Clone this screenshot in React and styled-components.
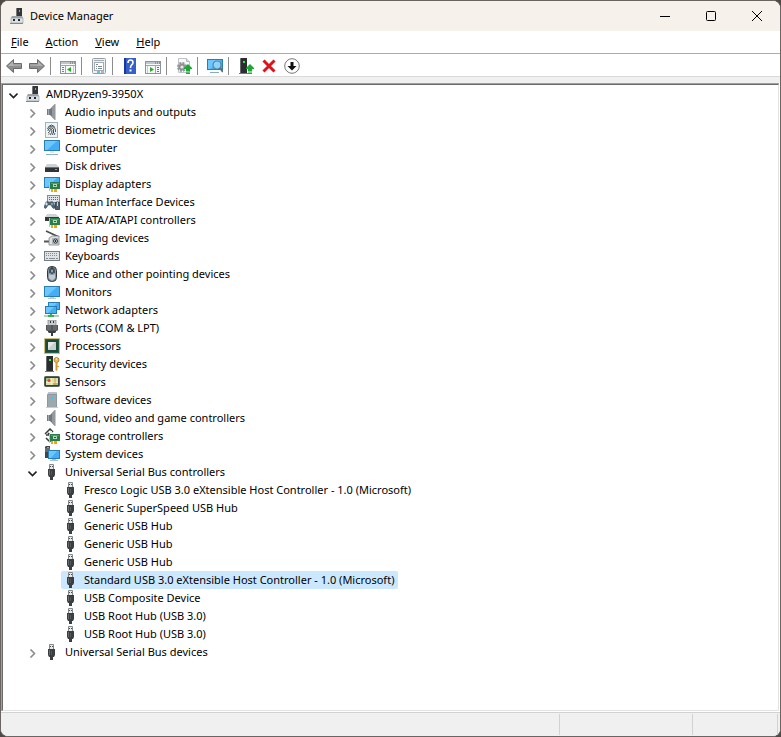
import React, { useState } from "react";
import styled, { createGlobalStyle } from "styled-components";

const GlobalStyle = createGlobalStyle`
    * {
        box-sizing: border-box;
    }
    body {
        margin: 0;
        background: #504a46;
        color: #000;
        font-family: "Noto Sans", "Open Sans", sans-serif;
        font-size: 11px;
        line-height: 16px;
    }
    button {
        padding: 0;
        border: 0;
        background: none;
        color: inherit;
        font: inherit;
    }
`

const Window = styled.div`
    height: 100vh;
    display: flex;
    flex-direction: column;
    overflow: hidden;
    border: 1px solid #6b6562;
    border-radius: 8px;
    background: #fff;
`

const TitleBar = styled.header`
    height: 30px;
    flex: none;
    display: flex;
    align-items: center;
    padding-left: 8px;
    background: #f6f1eb;
`

const Title = styled.h1`
    flex: 1;
    margin: 0 0 0 5px;
    font-size: 11px;
    font-weight: 400;
`

const CaptionButton = styled.button`
    width: 46px;
    height: 30px;
    display: flex;
    align-items: center;
    justify-content: center;

    &:hover {
        background: ${props => props.$danger ? "#e81123" : "#e8e3dd"};
    }
`

const MenuBar = styled.nav`
    height: 23px;
    flex: none;
    display: flex;
    padding-left: 2px;
    border-bottom: 1px solid #a9adb5;
`

const MenuButton = styled.button`
    padding: 0 9px 0 8px;

    &:hover {
        background: #e5f3ff;
    }
`

const Toolbar = styled.div`
    height: 23px;
    flex: none;
    display: flex;
    align-items: center;
    padding: 2px 0 0 1px;
    border-bottom: 1px solid #dadada;
`

const ToolButton = styled.button`
    width: 23px;
    height: 20px;
    display: flex;
    align-items: center;
    justify-content: center;

    &:hover {
        background: #e5f3ff;
    }
`

const Separator = styled.span`
    width: 1px;
    height: 18px;
    margin: 0 5px 0 2px;
    background: #8c8c8c;
`

const Frame = styled.main`
    flex: 1;
    min-height: 0;
    display: flex;
    margin-right: 1px;
    border-top: 1px solid #a0a0a0;
    border-left: 1px solid #a0a0a0;
`

const Panel = styled.div`
    flex: 1;
    overflow: auto;
    border: 1px solid;
    border-color: #696969 #e3e3e3 #e3e3e3 #696969;
`

const Gutter = styled.div`
    height: 6px;
    flex: none;
    background: #f0f0f0;
`

const Tree = styled.ul`
    margin: 0;
    padding: 0 0 0 ${props => props.$nested ? "19px" : "1px"};
    list-style: none;
`

const Row = styled.div`
    height: 18px;
    display: flex;
`

const Toggle = styled.button`
    width: 19px;
    height: 18px;
    display: flex;
    align-items: center;
    justify-content: center;
    padding-top: 3px;
`

const Label = styled.button`
    display: flex;
    align-items: center;
    gap: 5px;
    padding: 0 4px 0 2px;
    border-radius: 2px;
    background: ${props => props.$selected ? "#cce8ff" : "none"};
    white-space: nowrap;
`

const StatusBar = styled.footer`
    height: 24px;
    flex: none;
    display: grid;
    grid-template-columns: 1fr 133px 85px;
    margin-top: 1px;
    padding: 1px 2px 1px 0;
    border-top: 1px solid #d2d2d2;
    background: #f0f0f0;
`

const StatusCell = styled.div`
    border-right: 1px solid #d2d2d2;
`

const svgProps = { width: 16, height: 16, viewBox: "0 0 16 16", "aria-hidden": true }

function Screen({ x = 0, y = 1, w = 16, h = 11 }) {
    return (
        <>
            <rect x={x + 0.5} y={y + 0.5} width={w - 1} height={h - 1} fill="#43aef5" stroke="#287eaf" />
            <path d={`M${x + 1} ${y + 1}h${w - 4}L${x + 3} ${y + h - 1}H${x + 1}z`} fill="#6cc6ff" />
        </>
    )
}

function Card() {
    return (
        <>
            <rect x="5" y="6" width="1" height="9" fill="#b9c4bd" />
            <path d="M6 6h10v7H6z" fill="#2a7d4b" />
            <path d="M7 7h8v1H7z" fill="#4f9f6d" />
            <rect x="9" y="8" width="4" height="3" fill="#a7dcb4" />
            <rect x="10" y="9" width="2" height="1" fill="#1c6038" />
            <path d="M7 13h2v3H7zM10 13h3v3h-3z" fill="#e9a713" />
        </>
    )
}

function GreenArrow() {
    return <path d="M12 6l4 4v1h-2v2h-4v-2H8v-1zM10 13.500h4v1h-4zM10 15h4v1h-4z" fill="#19a832" />
}

function Speaker() {
    return (
        <>
            <path d="M3 5h3v6H3z" fill="#747b80" />
            <path d="M4 5h1v6H4z" fill="#a3aaaf" />
            <path d="M6 5l5-5v16l-5-5z" fill="#71787d" />
            <path d="M8 3l3-3v16l-3-3z" fill="#939a9f" />
            <path d="M11 0h1v16h-1z" fill="#c6cbce" />
        </>
    )
}

function Tower() {
    return (
        <>
            <path d="M2 1l1-1h6v15H2z" fill="#2b2d2f" />
            <path d="M2 1l1-1v15H2z" fill="#666a6c" />
            <rect x="5" y="3" width="2" height="2" fill="#35e847" />
            <path d="M1 15h9v1H1z" fill="#777" />
        </>
    )
}

function Keys() {
    return (
        <>
            <rect x=".5" y="3.500" width="15" height="9" fill="#dfe3e6" stroke="#747d83" />
            <path d="M2 5.500h12M2 7.500h12" stroke="#858e94" strokeDasharray="1 1" />
            <path d="M2 10.500h2M5 10.500h6M12 10.500h2" stroke="#858e94" />
        </>
    )
}

function Console() {
    return (
        <>
            <rect x=".5" y="3.500" width="15" height="12" fill="#f7f8f9" stroke="#8a949b" />
            <path d="M1 4h14v2H1z" fill="#bfc7cd" />
            <path d="M10 5h1M12 5h1M14 5h1" stroke="#54616a" />
            <path d="M1 7.500h14" stroke="#9aa5ad" />
        </>
    )
}

const drawings = {
    root: (
        <>
            <path d="M7 1l1-1h5v9H7z" fill="#34373a" />
            <path d="M7 1l1-1v9H7z" fill="#777" />
            <rect x="10" y="2" width="1" height="2" fill="#35e847" />
            <path d="M3 8h10l1 2H2z" fill="#9ba3a8" />
            <path d="M2 10h12v5H2z" fill="#dce1e5" stroke="#929ca2" strokeWidth=".6" />
            <path d="M4 11h2v2H4zM9 11h2v2H9z" fill="#22272a" />
            <path d="M1 15h13v1H1z" fill="#7f8990" />
        </>
    ),
    speaker: <Speaker />,
    fingerprint: (
        <>
            <rect x="1.500" y=".5" width="12" height="15" fill="#edf4f6" stroke="#9eb3bb" />
            <g fill="none" stroke="#3b4348" strokeWidth=".9">
                <path d="M4.500 4.500q3-3 6 0M3.500 7q0-2.500 4-2.500t4 3.500v2M3.500 9q1-.5 1-2 3-2.500 5 0v4M4 11q2-1 2-3 1.500-1.500 2 0 0 3-2 5M8 13q1.500-2 1.500-4M4.500 12.500l1-1M10 13l1-2" />
            </g>
        </>
    ),
    computer: (
        <>
            <Screen y={0} h={11} />
            <path d="M6 11h4v2H6z" fill="#dbe7ed" />
            <path d="M2 14h12v1H2z" fill="#8db2c6" />
        </>
    ),
    disk: (
        <>
            <path d="M3 6h9l3 3H1z" fill="#cfd3d5" />
            <path d="M1 9h14v5H1z" fill="#303437" />
            <path d="M1 9h14v1H1z" fill="#6c7276" />
            <rect x="11" y="11" width="2" height="1" fill="#31db57" />
        </>
    ),
    display: <><Screen y={1} h={11} /><Card /></>,
    hid: (
        <>
            <rect x="3.500" y="1.500" width="12" height="7" fill="#e0e4e7" stroke="#858d93" />
            <path d="M5 3.500h10M5 5.500h10" stroke="#60686e" strokeDasharray="1 1" />
            <path d="M2 8q2-1 3 0h1q2-1 3 0l2 5q-1 3-3 0l-1-2H4l-1 2q-2 3-3 0z" fill="#536471" stroke="#394b58" strokeWidth=".5" />
            <path d="M1 10h3M2.500 8.500v3" stroke="#c5e5fa" />
            <circle cx="8" cy="10" r="1" fill="#5ebaff" />
            <rect x="11" y="8" width="5" height="8" rx="2" fill="#52616b" stroke="#252d34" strokeWidth=".8" />
            <path d="M13.500 8v4" stroke="#b7d4e4" />
        </>
    ),
    ide: (
        <>
            <path d="M3 2h9l3 3H1z" fill="#cfd3d5" />
            <path d="M1 5h14v4H1z" fill="#34383b" />
            <Card />
        </>
    ),
    imaging: (
        <>
            <path d="M2 1l13 6" stroke="#4a4d50" strokeWidth="1.600" />
            <path d="M0 11.500h5" stroke="#555" strokeWidth="2" />
            <path d="M5 8l3-2h7v9H5z" fill="#dde0e2" stroke="#80878b" strokeWidth=".8" />
            <rect x="8" y="8" width="7" height="6" fill="#aeb5b9" />
            <circle cx="11.500" cy="11" r="2" fill="#fff" stroke="#333b40" />
            <circle cx="11.500" cy="11" r="1" fill="#172027" />
        </>
    ),
    keyboard: <Keys />,
    mouse: (
        <>
            <rect x="3.500" y=".5" width="9" height="15" rx="4" fill="#8494a0" stroke="#303a42" />
            <path d="M5 3q3-3 6 0v4H5z" fill="#4d5b66" />
            <path d="M5 8q3 2 6 0v4q-3 4-6 0z" fill="#c0cbd3" />
            <path d="M8 0v8" stroke="#1d2830" />
            <rect x="7" y="3" width="2" height="4" rx="1" fill="#cfe9fa" stroke="#1d2830" strokeWidth=".7" />
        </>
    ),
    monitor: (
        <>
            <Screen y={2} h={11} />
            <path d="M6 13h4v1h2v1H4v-1h2z" fill="#b9cbd5" />
        </>
    ),
    network: (
        <>
            <Screen x={4} y={0} w={12} h={8} />
            <Screen x={1} y={4} w={12} h={8} />
            <path d="M6 12h2v1h2v2H4v-2h2z" fill="#38ae57" />
            <path d="M0 14h4M10 14h5" stroke="#b5cfbb" strokeWidth="2" />
        </>
    ),
    port: (
        <>
            <path d="M4 0h8v6H4z" fill="#c8cbcd" stroke="#747a7e" strokeWidth=".7" />
            <path d="M6 1h1v2H6zM9 1h1v2H9z" fill="#333" />
            <path d="M2 5h12v5l-1 1H3l-1-1z" fill="#52575a" />
            <path d="M4 5v5M6 5v5M10 5v5M12 5v5" stroke="#8c9194" strokeWidth=".7" />
            <path d="M4 11h8v1l-1 1H9v3H7v-3H5l-1-1z" fill="#3a3e41" />
        </>
    ),
    cpu: (
        <>
            <rect x=".5" y=".5" width="15" height="15" fill="#f1e0a2" stroke="#a58b35" strokeDasharray="1 1" />
            <rect x="1" y="1" width="14" height="14" fill="#286047" />
            <rect x="2" y="2" width="12" height="12" fill="#1c4b38" />
            <rect x="4" y="4" width="8" height="8" fill="#c9cecf" />
            <path d="M4 4h7L4 11z" fill="#e5e8e8" />
        </>
    ),
    security: (
        <>
            <Tower />
            <circle cx="12.500" cy="4" r="2.500" fill="#e8bd59" stroke="#a47822" strokeWidth=".8" />
            <circle cx="12.500" cy="3" r=".8" fill="#fff3c2" />
            <path d="M11.500 6h2v8l-1 1-1-1zM13 10h2v1h-2z" fill="#cf9c39" />
        </>
    ),
    sensor: (
        <>
            <rect x=".5" y="2.500" width="15" height="10" rx="1" fill="#37403a" stroke="#59625b" />
            <path d="M2 4h12v7H2z" fill="#dbe2a6" />
            <path d="M2 4h4v3H2zM9 8h5v3H9z" fill="#9fc480" />
            <path d="M2 8.500h12M7.500 4v7" stroke="#f5ebc3" />
            <path d="M11 4v7" stroke="#d89a45" />
            <circle cx="5" cy="6.500" r="1.500" fill="#e5483b" />
        </>
    ),
    software: (
        <>
            <path d="M4 1l1-1h7l1 1v14H3V3z" fill="#8e999f" />
            <path d="M4 1l1-1h7l1 2H4z" fill="#b9c2c7" />
            <path d="M4 3h8v12H4z" fill="#9da8ae" />
            <rect x="7" y="5" width="2" height="2" fill="#35c7f1" />
            <path d="M2 15h12v1H2z" fill="#c9cdd0" />
        </>
    ),
    storage: (
        <>
            <path d="M1 6l5-5 3 3M2 7h6M7 8L4 5M2 10l3 3h3" fill="none" stroke="#373b3e" strokeWidth="1.500" />
            <path d="M6 3h2v2H6z" fill="#eee" />
            <Card />
        </>
    ),
    system: (
        <>
            <path d="M1 1l1-1h4v12H1z" fill="#414648" />
            <path d="M1 3h5M1 5h5" stroke="#899196" />
            <rect x="3" y="1" width="2" height="1" fill="#35e847" />
            <Screen x={4} y={4} w={12} h={9} />
            <path d="M8 13h4v1h2v1H6v-1h2z" fill="#a9c2d0" />
        </>
    ),
    usb: (
        <>
            <path d="M5.500.5h4v5h-4z" fill="#e7e8e8" stroke="#85898b" />
            <path d="M6 2h1v1H6zM8 2h1v1H8z" fill="#4b4e50" />
            <path d="M4 5h7v6l-1 2H9v3H6v-3H5l-1-2z" fill="#3c3f41" />
            <path d="M5 6h1v5H5z" fill="#666b6e" />
            <path d="M7 7h1v4H7z" fill="#555a5c" />
        </>
    ),
    back: (
        <>
            <path d="M.5 8l7-6.500v4h8v5h-8v4z" fill="#8e8e8e" stroke="#6b6b6b" strokeLinejoin="round" />
            <path d="M2 8l5-4.500v3h8v1z" fill="#b4b4b4" />
        </>
    ),
    forward: (
        <>
            <path d="M15.500 8l-7-6.500v4h-8v5h8v4z" fill="#8e8e8e" stroke="#6b6b6b" strokeLinejoin="round" />
            <path d="M14 8L9 3.500v3H1v1z" fill="#b4b4b4" />
        </>
    ),
    consoleTree: (
        <>
            <Console />
            <path d="M5.500 8v7" stroke="#9aa5ad" />
            <path d="M2 9.500h2M2 11.500h2M2 13.500h2" stroke="#6d8596" />
            <path d="M13.500 8v7" stroke="#c3cbd0" />
            <path d="M11 9v5l-4-2.500z" fill="#2da62f" />
        </>
    ),
    properties: (
        <>
            <rect x="1.500" y=".5" width="13" height="15" rx="1" fill="#eef1f3" stroke="#969ea4" />
            <path d="M3 2.500h10" stroke="#a2abb1" />
            <rect x="3.500" y="4.500" width="9" height="8" fill="#fff" stroke="#a2abb1" />
            <path d="M5 6.500h2M5 8.500h1M5 10.500h1M7 8.500h4M7 10.500h4" stroke="#7d8991" />
            <path d="M6 14h3" stroke="#1eb7ea" strokeWidth="1.500" />
            <path d="M10 14h3" stroke="#9ba3a8" strokeWidth="1.500" />
        </>
    ),
    help: (
        <>
            <path d="M2 0h12v16H2z" fill="#365fca" />
            <path d="M2 0h2v16H2z" fill="#173997" />
            <path d="M6 5q0-3 2.500-3T11 4.500Q11 6 9.500 7 8.500 8 8.500 10" fill="none" stroke="#fff" strokeWidth="1.600" />
            <rect x="7.500" y="11.500" width="2" height="2" fill="#fff" />
        </>
    ),
    actionPane: (
        <>
            <Console />
            <path d="M10.500 8v7" stroke="#9aa5ad" />
            <path d="M2.500 8v7" stroke="#c3cbd0" />
            <path d="M12 9.500h2M12 11.500h2M12 13.500h2" stroke="#467da7" />
            <path d="M5 9v5l4-2.500z" fill="#2da62f" />
        </>
    ),
    update: (
        <>
            <path d="M2.500.5h8l3 3v11h-11z" fill="#f8f8f8" stroke="#c1c4c6" />
            <path d="M10.500.5v3h3" fill="#ddd" stroke="#b4b7b9" />
            <circle cx="6" cy="9" r="4" fill="none" stroke="#939799" strokeWidth="2" strokeDasharray="2 1.140" />
            <circle cx="6" cy="9" r="2.500" fill="#e8e8e8" stroke="#8e9295" strokeWidth="1.800" />
            <GreenArrow />
        </>
    ),
    scan: (
        <>
            <Screen y={1} h={11} />
            <path d="M3 14.500h9" stroke="#8baabd" />
            <circle cx="10" cy="7" r="4" fill="#9cdcfb" fillOpacity=".8" stroke="#55859e" strokeWidth="1.200" />
            <path d="M13 10l3 4" stroke="#537083" strokeWidth="2" />
        </>
    ),
    enable: <><Tower /><GreenArrow /></>,
    remove: <path d="M2.500 2.500l11 11M13.500 2.500l-11 11" stroke="#db141c" strokeWidth="3" />,
    disable: (
        <>
            <circle cx="8" cy="8" r="7.300" fill="#fff" stroke="#777" />
            <path d="M6.500 4h3v4h3L8 12.500 3.500 8h3z" fill="#111" />
        </>
    ),
}

function Icon({ name }) {
    return <svg {...svgProps}>{drawings[name]}</svg>
}

function Chevron({ open }) {
    return (
        <svg width="9" height="9" viewBox="0 0 9 9" fill="none" aria-hidden="true">
            {open
                ? <path d="M.5 2.500l4 4 4-4" stroke="#222" strokeWidth="1.600" />
                : <path d="M2.500.5l4 4-4 4" stroke="#8c8c8c" strokeWidth="1.600" />}
        </svg>
    )
}

const menus = ["File", "Action", "View", "Help"]

const tools = [
    [["back", "Back"], ["forward", "Forward"]],
    [["consoleTree", "Show/Hide Console Tree"]],
    [["properties", "Properties"]],
    [["help", "Help"], ["actionPane", "Show/Hide Action Pane"]],
    [["update", "Update device driver"]],
    [["scan", "Scan for hardware changes"]],
    [["enable", "Update driver"], ["remove", "Uninstall device"], ["disable", "Disable device"]],
]

const usbDevices = [
    "Fresco Logic USB 3.0 eXtensible Host Controller - 1.0 (Microsoft)",
    "Generic SuperSpeed USB Hub",
    "Generic USB Hub",
    "Generic USB Hub",
    "Generic USB Hub",
    "Standard USB 3.0 eXtensible Host Controller - 1.0 (Microsoft)",
    "USB Composite Device",
    "USB Root Hub (USB 3.0)",
    "USB Root Hub (USB 3.0)",
]

const categories = [
    ["speaker", "Audio inputs and outputs"],
    ["fingerprint", "Biometric devices"],
    ["computer", "Computer"],
    ["disk", "Disk drives"],
    ["display", "Display adapters"],
    ["hid", "Human Interface Devices"],
    ["ide", "IDE ATA/ATAPI controllers"],
    ["imaging", "Imaging devices"],
    ["keyboard", "Keyboards"],
    ["mouse", "Mice and other pointing devices"],
    ["monitor", "Monitors"],
    ["network", "Network adapters"],
    ["port", "Ports (COM & LPT)"],
    ["cpu", "Processors"],
    ["security", "Security devices"],
    ["sensor", "Sensors"],
    ["software", "Software devices"],
    ["speaker", "Sound, video and game controllers"],
    ["storage", "Storage controllers"],
    ["system", "System devices"],
    ["usb", "Universal Serial Bus controllers", usbDevices],
    ["usb", "Universal Serial Bus devices"],
]

const tree = {
    id: "root",
    icon: "root",
    label: "AMDRyzen9-3950X",
    children: categories.map(([icon, label, devices = []], i) => ({
        id: `c${i}`,
        icon,
        label,
        expandable: true,
        children: devices.map((device, j) => ({ id: `c${i}-${j}`, icon: "usb", label: device, children: [] })),
    })),
}

function Node({ node, open, selected, onToggle, onSelect }) {
    const expandable = node.expandable || node.children.length > 0
    const isOpen = open.includes(node.id)
    return (
        <li>
            <Row>
                {expandable
                    ? (
                        <Toggle aria-label={node.label} aria-expanded={isOpen} onClick={() => onToggle(node.id)}>
                            <Chevron open={isOpen} />
                        </Toggle>
                    )
                    : <Toggle as="span" />}
                <Label $selected={selected === node.id} onClick={() => onSelect(node.id)}>
                    <Icon name={node.icon} />
                    {node.label}
                </Label>
            </Row>
            {isOpen && node.children.length > 0 && (
                <Tree $nested>
                    {node.children.map(child => (
                        <Node
                            key={child.id}
                            node={child}
                            open={open}
                            selected={selected}
                            onToggle={onToggle}
                            onSelect={onSelect}
                        />
                    ))}
                </Tree>
            )}
        </li>
    )
}

export default function App() {
    const [open, setOpen] = useState(["root", "c20"])
    const [selected, setSelected] = useState("c20-5")

    const toggle = id => setOpen(open.includes(id) ? open.filter(o => o !== id) : [...open, id])

    return (
        <>
            <GlobalStyle />
            <Window>
                <TitleBar>
                    <Icon name="root" />
                    <Title>Device Manager</Title>
                    <CaptionButton aria-label="Minimize">
                        <svg width="10" height="10"><path d="M0 5.500h10" stroke="#000" /></svg>
                    </CaptionButton>
                    <CaptionButton aria-label="Maximize">
                        <svg width="10" height="10"><rect x=".5" y=".5" width="9" height="9" rx="1" fill="none" stroke="#000" /></svg>
                    </CaptionButton>
                    <CaptionButton aria-label="Close" $danger>
                        <svg width="10" height="10"><path d="M0 0l10 10M10 0L0 10" stroke="#000" /></svg>
                    </CaptionButton>
                </TitleBar>
                <MenuBar>
                    {menus.map(menu => (
                        <MenuButton key={menu}><u>{menu[0]}</u>{menu.slice(1)}</MenuButton>
                    ))}
                </MenuBar>
                <Toolbar>
                    {tools.map((group, i) => (
                        <React.Fragment key={i}>
                            {i > 0 && <Separator />}
                            {group.map(([icon, label]) => (
                                <ToolButton key={icon} aria-label={label}><Icon name={icon} /></ToolButton>
                            ))}
                        </React.Fragment>
                    ))}
                </Toolbar>
                <Gutter />
                <Frame>
                    <Panel>
                        <Tree>
                            <Node node={tree} open={open} selected={selected} onToggle={toggle} onSelect={setSelected} />
                        </Tree>
                    </Panel>
                </Frame>
                <StatusBar>
                    <StatusCell />
                    <StatusCell />
                    <StatusCell />
                </StatusBar>
            </Window>
        </>
    )
}
